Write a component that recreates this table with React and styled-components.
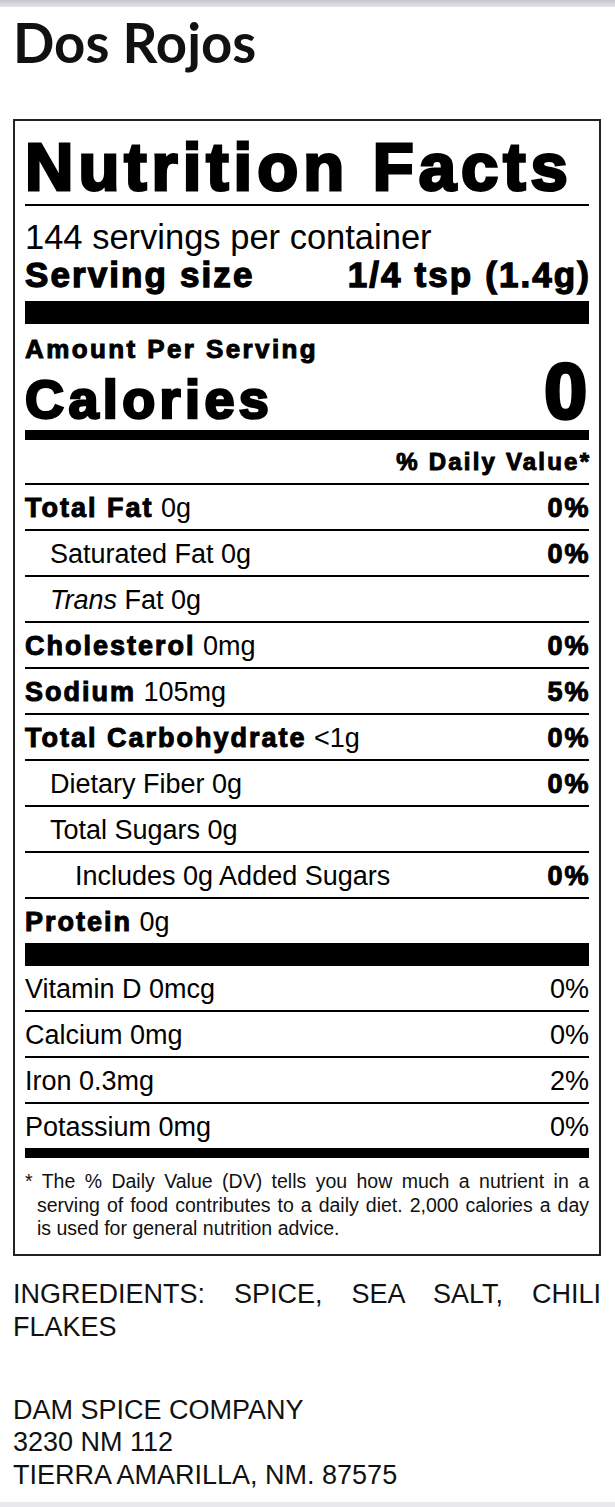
import React from 'react';
import styled, { createGlobalStyle } from 'styled-components';

const GlobalStyle = createGlobalStyle`
  html, body { margin: 0; padding: 0; background: #fff; }
  body { font-family: "Liberation Sans", Arial, sans-serif; color: #000; }
  * { box-sizing: content-box; }
`;

const Page = styled.div`
  width: 615px;
  min-height: 1507px;
  display: flex;
  flex-direction: column;
  background: #fff;
`;

const TopBand = styled.div`
  height: 7px;
  background: linear-gradient(#c6c6ca, #e4e4e8);
`;

const BottomBand = styled.div`
  height: 7px;
  margin-top: auto;
  background: #e9e9ed;
`;

const Content = styled.main`
  padding: 0 14px 11px 13px;
`;

const Title = styled.h1`
  margin: 8px 0 0;
  font-family: Lato, "Noto Sans", sans-serif;
  font-weight: 700;
  font-size: 54.5px;
  line-height: 54px;
  color: #111;
`;

const Label = styled.section`
  margin-top: 50px;
  border: 2px solid #222;
  padding: 12px 10px 13px;
  display: flex;
  flex-direction: column;
`;

const Heading = styled.h2`
  margin: 0;
  font-size: 67px;
  line-height: 67px;
  font-weight: 700;
  letter-spacing: 5px;
  -webkit-text-stroke: 3px #000;
  white-space: nowrap;
`;

const Rule = styled.div`
  height: ${(p) => p.$h}px;
  margin-top: ${(p) => p.$mt || 0}px;
  background: #000;
`;

const Servings = styled.div`
  margin-top: 12px;
  font-size: 34.5px;
  line-height: 38px;
`;

const ServingSize = styled.div`
  display: flex;
  justify-content: space-between;
  font-size: 35px;
  line-height: 38px;
  font-weight: 700;
  letter-spacing: 2.1px;
  -webkit-text-stroke: 1.3px #000;
  margin-right: -2.1px;
`;

const Amount = styled.div`
  margin-top: 10px;
  font-size: 26px;
  line-height: 30px;
  font-weight: 700;
  letter-spacing: 2.4px;
  -webkit-text-stroke: 1px #000;
`;

const CaloriesRow = styled.div`
  display: flex;
  justify-content: space-between;
  align-items: baseline;
  margin-top: 2px;
  font-weight: 700;
`;

const CaloriesLabel = styled.span`
  font-size: 54px;
  line-height: 60px;
  letter-spacing: 4.4px;
  -webkit-text-stroke: 2.6px #000;
`;

const CaloriesValue = styled.span`
  font-size: 77px;
  line-height: 50px;
  -webkit-text-stroke: 3.6px #000;
  margin-right: 2px;
`;

const DVHeader = styled.div`
  margin-top: 7px;
  text-align: right;
  font-size: 24px;
  line-height: 30px;
  font-weight: 700;
  letter-spacing: 2.2px;
  -webkit-text-stroke: 1px #000;
  margin-right: -2.2px;
`;

const NutrientRow = styled.div`
  display: flex;
  justify-content: space-between;
  align-items: center;
  height: 42px;
  padding-top: 2px;
  margin-top: ${(p) => p.$mt || 0}px;
  border-top: ${(p) => (p.$line ? '2px solid #000' : '0')};
  padding-left: ${(p) => p.$indent * 25}px;
  font-size: 27px;
  line-height: 42px;
  white-space: nowrap;
`;

const Strong = styled.b`
  font-weight: 700;
  letter-spacing: 2px;
  -webkit-text-stroke: 1px #000;
`;

const Pct = styled.span`
  font-weight: ${(p) => (p.$bold ? 700 : 400)};
  letter-spacing: ${(p) => (p.$bold ? '2px' : '0')};
  margin-right: ${(p) => (p.$bold ? '-1.5px' : '0')};
  -webkit-text-stroke: ${(p) => (p.$bold ? '1px #000' : '0')};
`;

const Footnote = styled.p`
  margin: 12px 0 0;
  font-size: 19.5px;
  line-height: 23.5px;
  text-align: justify;
  padding-left: 12px;
  text-indent: -12px;
  color: #111;
`;

const Ingredients = styled.p`
  margin: 22px 0 0;
  font-size: 27px;
  line-height: 33px;
  text-align: justify;
  color: #111;
`;

const Address = styled.address`
  margin-top: 50px;
  font-style: normal;
  font-size: 27px;
  line-height: 32.5px;
  color: #111;
`;

const macros = [
  { bold: 'Total Fat', rest: ' 0g', pct: '0%', indent: 0 },
  { label: 'Saturated Fat 0g', pct: '0%', indent: 1 },
  { trans: true, indent: 1 },
  { bold: 'Cholesterol', rest: ' 0mg', pct: '0%', indent: 0 },
  { bold: 'Sodium', rest: ' 105mg', pct: '5%', indent: 0 },
  { bold: 'Total Carbohydrate', rest: ' <1g', pct: '0%', indent: 0 },
  { label: 'Dietary Fiber 0g', pct: '0%', indent: 1 },
  { label: 'Total Sugars 0g', indent: 1 },
  { label: 'Includes 0g Added Sugars', pct: '0%', indent: 2 },
  { bold: 'Protein', rest: ' 0g', indent: 0 },
];

const vitamins = [
  { label: 'Vitamin D 0mcg', pct: '0%' },
  { label: 'Calcium 0mg', pct: '0%' },
  { label: 'Iron 0.3mg', pct: '2%' },
  { label: 'Potassium 0mg', pct: '0%' },
];

export default function App() {
  return (
    <Page>
      <GlobalStyle />
      <TopBand />
      <Content>
        <Title>Dos Rojos</Title>
        <Label>
          <Heading>Nutrition Facts</Heading>
          <Rule $h={2} $mt={4} />
          <Servings>144 servings per container</Servings>
          <ServingSize>
            <span>Serving size</span>
            <span>1/4 tsp (1.4g)</span>
          </ServingSize>
          <Rule $h={23} $mt={7} />
          <Amount>Amount Per Serving</Amount>
          <CaloriesRow>
            <CaloriesLabel>Calories</CaloriesLabel>
            <CaloriesValue>0</CaloriesValue>
          </CaloriesRow>
          <Rule $h={10} $mt={1} />
          <DVHeader>% Daily Value*</DVHeader>
          {macros.map((m, i) => (
            <NutrientRow key={i} $line $indent={m.indent} $mt={i === 0 ? 6 : 0}>
              <span>
                {m.bold && <Strong>{m.bold}</Strong>}
                {m.rest}
                {m.label}
                {m.trans && (
                  <>
                    <i>Trans</i> Fat 0g
                  </>
                )}
              </span>
              {m.pct && <Pct $bold>{m.pct}</Pct>}
            </NutrientRow>
          ))}
          <Rule $h={23} />
          {vitamins.map((v, i) => (
            <NutrientRow key={v.label} $line={i > 0} $indent={0}>
              <span>{v.label}</span>
              <Pct>{v.pct}</Pct>
            </NutrientRow>
          ))}
          <Rule $h={10} />
          <Footnote>
            * The % Daily Value (DV) tells you how much a nutrient in a serving of food contributes to a daily diet. 2,000 calories a day is used for general nutrition advice.
          </Footnote>
        </Label>
        <Ingredients>INGREDIENTS: SPICE, SEA SALT, CHILI FLAKES</Ingredients>
        <Address>
          DAM SPICE COMPANY
          <br />
          3230 NM 112
          <br />
          TIERRA AMARILLA, NM. 87575
        </Address>
      </Content>
      <BottomBand />
    </Page>
  );
}
